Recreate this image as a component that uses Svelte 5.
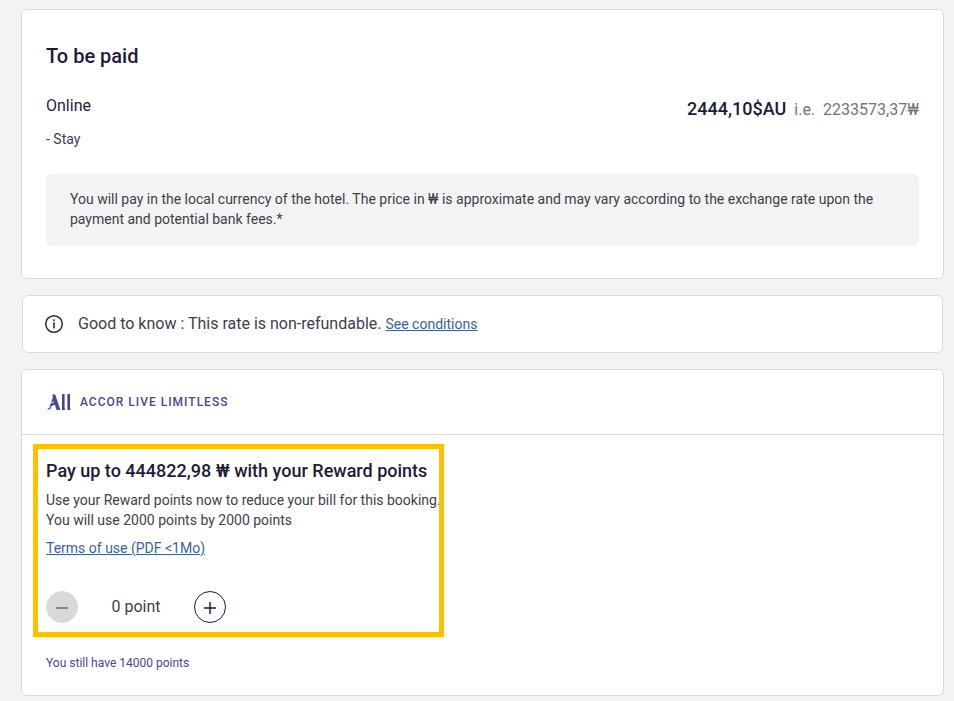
<script>
  const step = 2000;
  const balance = 14000;
  let points = $state(0);
  const label = $derived(points === 0 ? '0 point' : `${points} points`);
</script>

<main>
  <section class="card payment">
    <h2>To be paid</h2>
    <div class="row">
      <span class="method">Online</span>
      <p class="price">
        <strong>2444,10$AU</strong>
        <span>i.e.</span>
        <span>2233573,37₩</span>
      </p>
    </div>
    <p class="item">- Stay</p>
    <p class="note">
      You will pay in the local currency of the hotel. The price in ₩ is approximate and may vary
      according to the exchange rate upon the payment and potential bank fees.*
    </p>
  </section>

  <section class="card info">
    <svg width="20" height="20" viewBox="0 0 20 20" aria-hidden="true">
      <circle cx="10" cy="10" r="8.3" fill="none" stroke="#2b2748" stroke-width="1.5" />
      <rect x="9.2" y="5.4" width="1.6" height="1.7" fill="#2b2748" />
      <rect x="9.2" y="8.4" width="1.6" height="6" fill="#2b2748" />
    </svg>
    <p>Good to know : This rate is non-refundable. <a href="#conditions">See conditions</a></p>
  </section>

  <section class="card rewards">
    <header>
      <svg width="26" height="18" viewBox="0 0 26 18" aria-hidden="true">
        <path
          fill="#474790"
          d="M6.4 1.4h2.8L14.4 17h-3.8L7.8 8.6 5 9.8l1.8-5.2zM4.4 10.8l3.8-1.6.8 2.2-5.6 2.6zM3 14.8l2.6-1.2-.8 1.8L.8 17.2zM16 1h2.6v13.4l.4 2.6h-3zM21.4 1H24v13.4l.6 2.6h-3.2z"
        />
      </svg>
      <span>ACCOR LIVE LIMITLESS</span>
    </header>
    <div class="body">
      <div class="offer">
        <h3>Pay up to 444822,98 ₩ with your Reward points</h3>
        <p>Use your Reward points now to reduce your bill for this booking.</p>
        <p>You will use 2000 points by 2000 points</p>
        <a href="#terms">Terms of use (PDF &lt;1Mo)</a>
        <div class="stepper">
          <button aria-label="Remove points" disabled={points === 0} onclick={() => (points -= step)}>
            <svg width="14" height="14" viewBox="0 0 14 14" aria-hidden="true">
              <path d="M1 8h12" stroke="currentColor" stroke-width="2" />
            </svg>
          </button>
          <output>{label}</output>
          <button
            aria-label="Add points"
            disabled={points + step > balance}
            onclick={() => (points += step)}
          >
            <svg width="14" height="14" viewBox="0 0 14 14" aria-hidden="true">
              <path d="M1 8h12M7 2v12" stroke="currentColor" stroke-width="1.5" />
            </svg>
          </button>
        </div>
      </div>
      <p class="balance">You still have {balance - points} points</p>
    </div>
  </section>
</main>

<style>
  :global(body) {
    margin: 0;
    background: #f3f3f3;
  }
  main {
    display: flex;
    flex-direction: column;
    gap: 16px;
    padding: 9px 10px 5px 21px;
    font-family: Roboto, 'Liberation Sans', sans-serif;
    font-size: 14px;
    line-height: 20px;
    color: #403e4c;
  }
  h2,
  h3,
  p {
    margin: 0;
  }
  a {
    color: #3c5fa0;
    font-size: 14px;
  }
  .card {
    background: #fff;
    border: 1px solid #d9dadb;
    border-radius: 6px;
  }
  .payment {
    padding: 32px 24px;
  }
  h2 {
    font-size: 20px;
    line-height: 28px;
    font-weight: 500;
    color: #1e1b38;
  }
  .row {
    display: flex;
    justify-content: space-between;
    align-items: center;
    margin-top: 24px;
    line-height: 24px;
  }
  .method {
    font-size: 16px;
    line-height: 24px;
    align-self: flex-start;
    color: #252339;
  }
  .price {
    display: flex;
    align-items: baseline;
    gap: 8px;
    margin-top: 3px;
    font-size: 16px;
    color: #74737f;
  }
  .price strong {
    font-size: 18px;
    font-weight: 500;
    color: #1e1b38;
  }
  .item {
    margin-top: 7px;
  }
  .note {
    margin-top: 25px;
    padding: 15px 24px 17px;
    background: #f3f3f3;
    border-radius: 6px;
  }
  .info {
    display: flex;
    align-items: center;
    gap: 14px;
    margin: 0 1px;
    padding: 16px 21px;
  }
  .info p {
    font-size: 16px;
    line-height: 24px;
  }
  header {
    display: flex;
    align-items: center;
    gap: 8px;
    padding: 20px 24px;
    height: 24px;
    border-bottom: 1px solid #d9dadb;
    color: #474790;
    font-size: 12px;
    font-weight: 500;
    letter-spacing: 1px;
  }
  .body {
    padding: 24px 24px 22px;
  }
  .offer {
    position: relative;
    width: fit-content;
  }
  .offer::after {
    content: '';
    position: absolute;
    inset: -15px -3px -14px -13px;
    border: 5px solid #ffc000;
    pointer-events: none;
  }
  h3 {
    margin-bottom: 7px;
    font-size: 18px;
    line-height: 24px;
    font-weight: 500;
    color: #1e1b38;
  }
  .offer a {
    display: inline-block;
    margin-top: 8px;
  }
  .stepper {
    display: flex;
    align-items: center;
    margin-top: 33px;
  }
  output {
    width: 116px;
    text-align: center;
    font-size: 16px;
  }
  button {
    display: grid;
    place-items: center;
    width: 32px;
    height: 32px;
    padding: 0;
    border: 1px solid #1e1852;
    border-radius: 50%;
    background: #fff;
    color: #1e1852;
    cursor: pointer;
  }
  button:disabled {
    border-color: #d9d9dc;
    background: #d9d9dc;
    color: #8b8996;
    cursor: default;
  }
  .balance {
    margin-top: 30px;
    font-size: 12px;
    color: #474790;
  }
</style>
